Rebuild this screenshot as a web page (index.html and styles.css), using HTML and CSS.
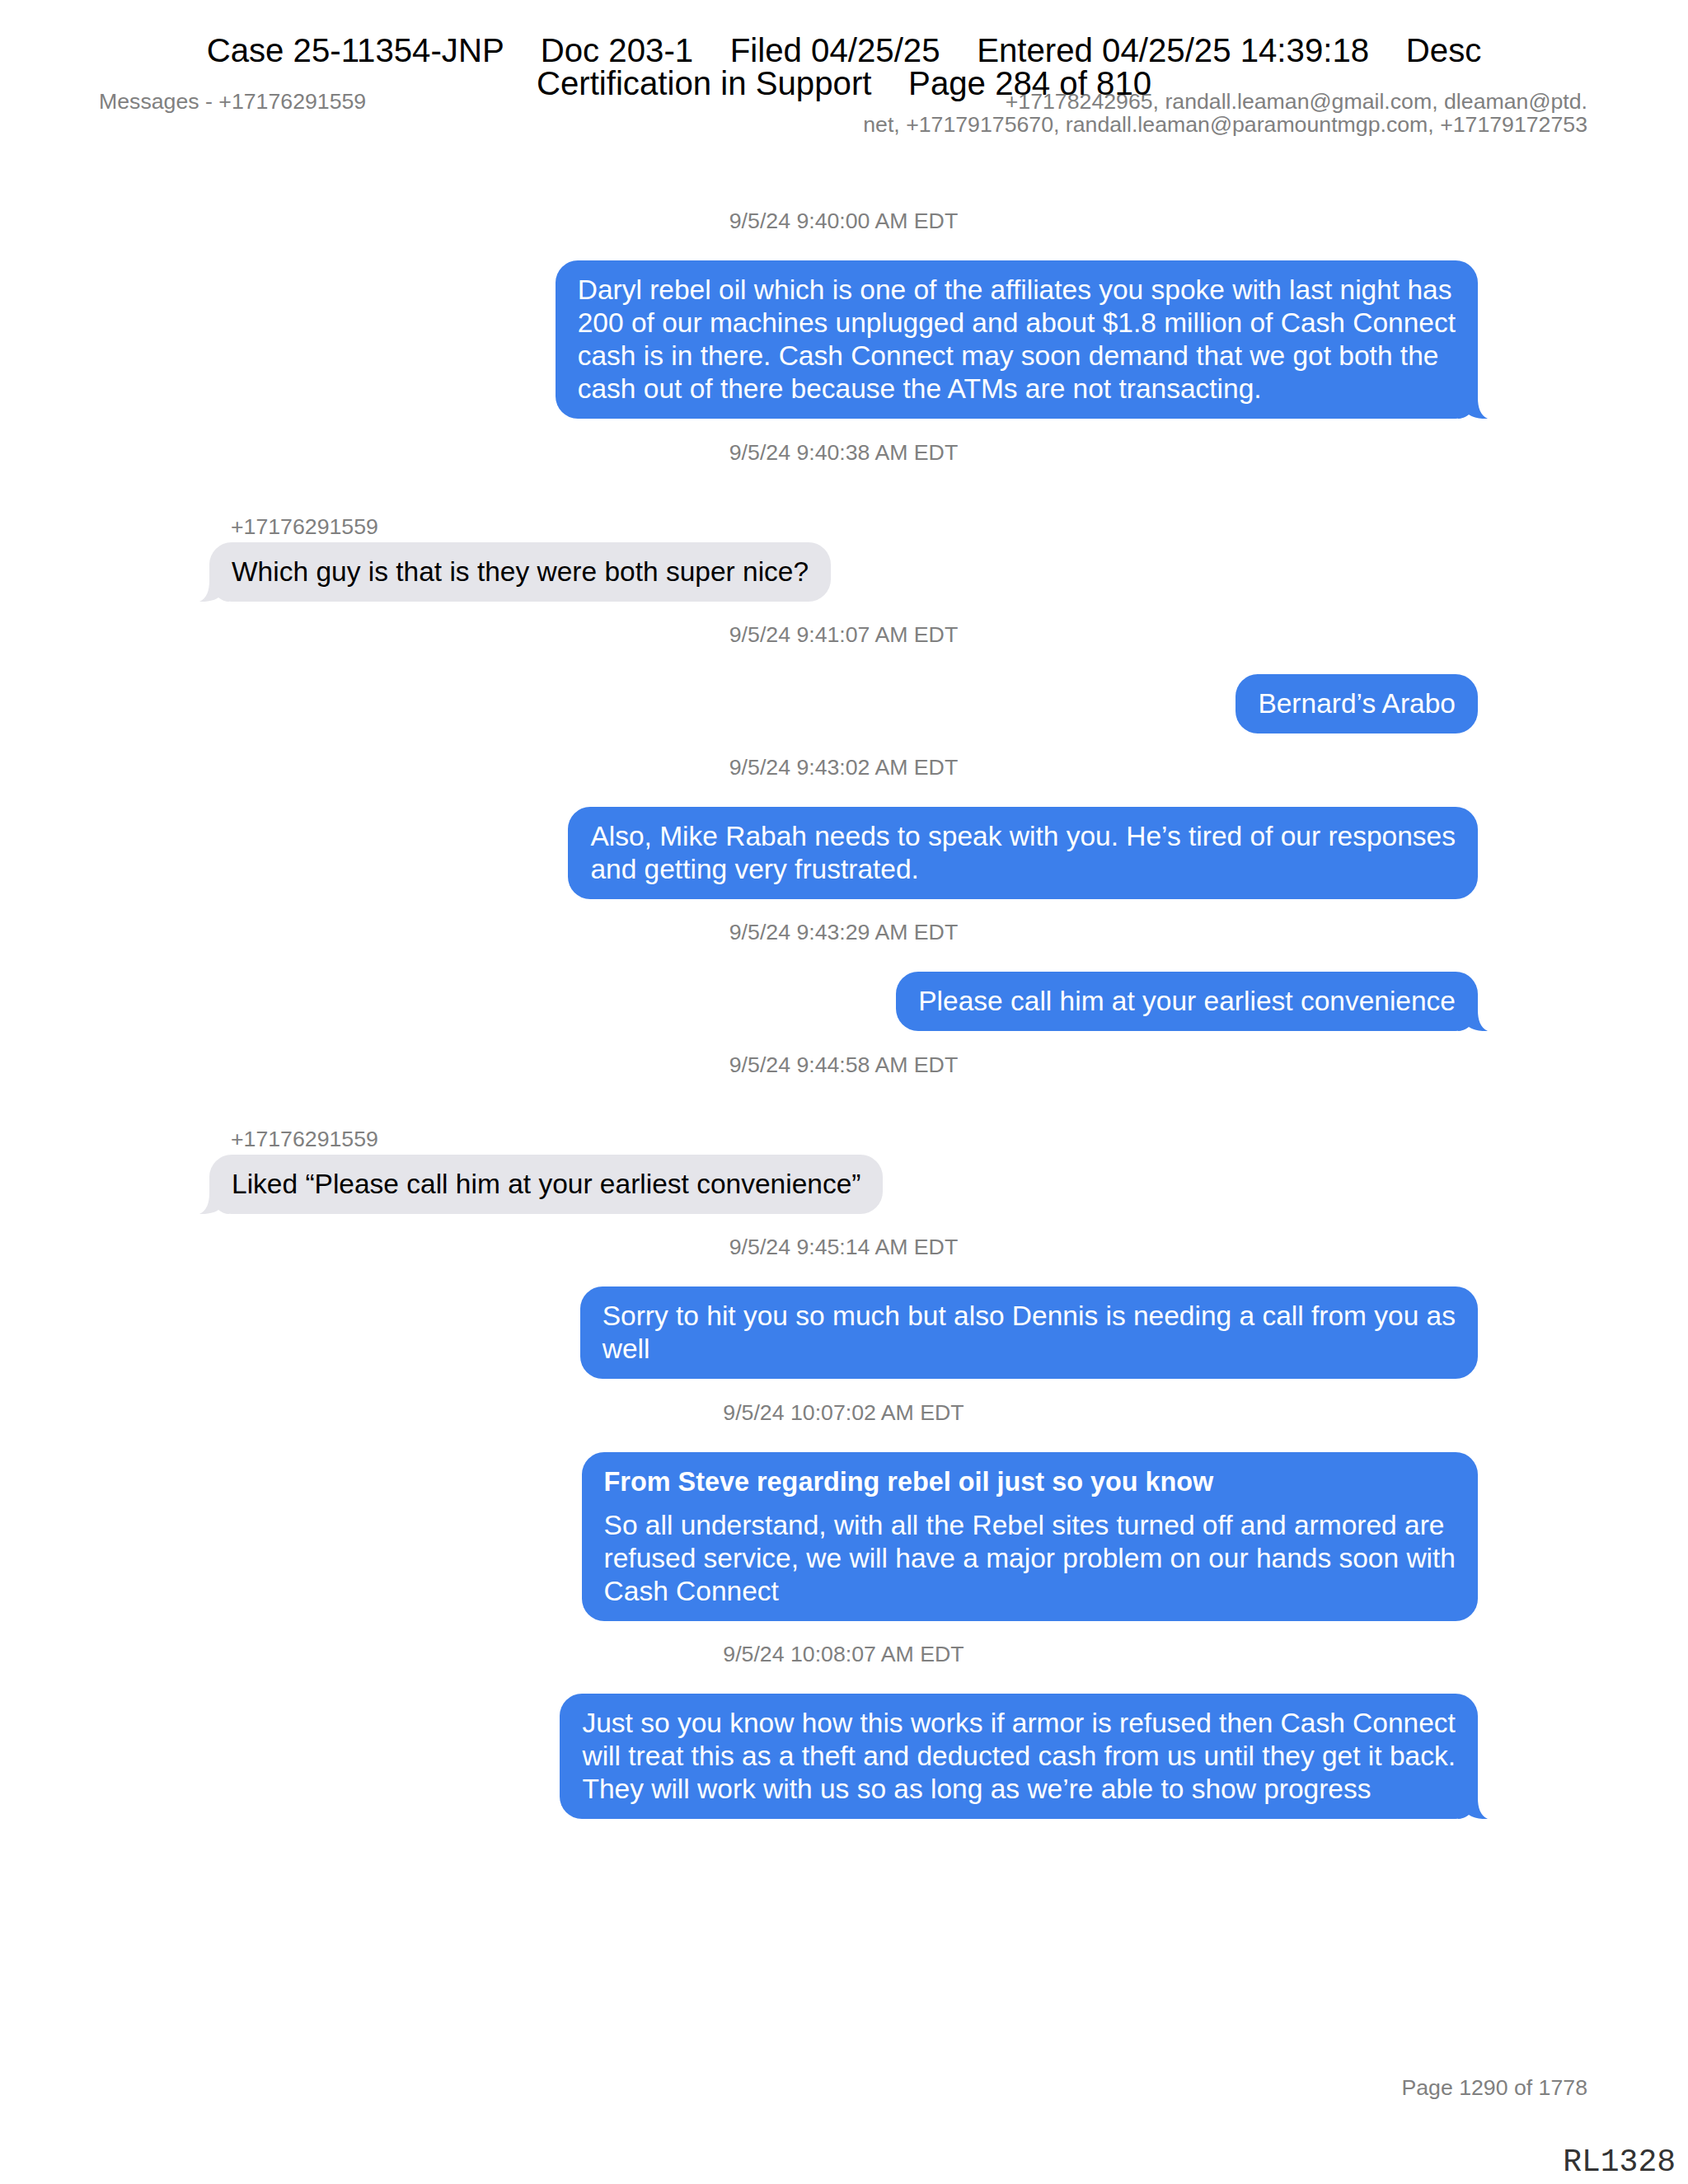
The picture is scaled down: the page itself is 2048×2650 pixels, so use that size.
FILE: index.html
```
<!DOCTYPE html>
<html lang="en">
<head>
<meta charset="utf-8">
<title>Messages - +17176291559</title>
<link rel="stylesheet" href="styles.css">
</head>
<body>
<div class="page">
  <div class="stamp">
    <div class="stamp-line">Case 25-11354-JNP    Doc 203-1    Filed 04/25/25    Entered 04/25/25 14:39:18    Desc</div>
    <div class="stamp-line">Certification in Support    Page 284 of 810</div>
  </div>

  <header class="meta">
    <div class="meta-left">Messages - +17176291559</div>
    <div class="meta-right">+17178242965, randall.leaman@gmail.com, dleaman@ptd.<br>net, +17179175670, randall.leaman@paramountmgp.com, +17179172753</div>
  </header>

  <main class="thread">
    <div class="ts first">9/5/24 9:40:00 AM EDT</div>
    <div class="bubble out">Daryl rebel oil which is one of the affiliates you spoke with last night has<br>200 of our machines unplugged and about $1.8 million of Cash Connect<br>cash is in there. Cash Connect may soon demand that we got both the<br>cash out of there because the ATMs are not transacting.<svg class="tail" viewBox="0 0 36 28" width="36" height="28"><path d="M0,0 H24 V3 C24,14 27,24 36,28 C30,28.5 19,27.5 13,23 C9,26 5,28 0,28 Z"/></svg></div>

    <div class="ts">9/5/24 9:40:38 AM EDT</div>
    <div class="sender">+17176291559</div>
    <div class="bubble in">Which guy is that is they were both super nice?<svg class="tail" viewBox="0 0 36 28" width="36" height="28"><path d="M0,0 H24 V3 C24,14 27,24 36,28 C30,28.5 19,27.5 13,23 C9,26 5,28 0,28 Z"/></svg></div>

    <div class="ts">9/5/24 9:41:07 AM EDT</div>
    <div class="bubble out">Bernard’s Arabo</div>

    <div class="ts">9/5/24 9:43:02 AM EDT</div>
    <div class="bubble out">Also, Mike Rabah needs to speak with you. He’s tired of our responses<br>and getting very frustrated.</div>

    <div class="ts">9/5/24 9:43:29 AM EDT</div>
    <div class="bubble out">Please call him at your earliest convenience<svg class="tail" viewBox="0 0 36 28" width="36" height="28"><path d="M0,0 H24 V3 C24,14 27,24 36,28 C30,28.5 19,27.5 13,23 C9,26 5,28 0,28 Z"/></svg></div>

    <div class="ts">9/5/24 9:44:58 AM EDT</div>
    <div class="sender">+17176291559</div>
    <div class="bubble in">Liked “Please call him at your earliest convenience”<svg class="tail" viewBox="0 0 36 28" width="36" height="28"><path d="M0,0 H24 V3 C24,14 27,24 36,28 C30,28.5 19,27.5 13,23 C9,26 5,28 0,28 Z"/></svg></div>

    <div class="ts">9/5/24 9:45:14 AM EDT</div>
    <div class="bubble out">Sorry to hit you so much but also Dennis is needing a call from you as<br>well</div>

    <div class="ts">9/5/24 10:07:02 AM EDT</div>
    <div class="bubble out"><div class="bubble-title">From Steve regarding rebel oil just so you know</div>So all understand, with all the Rebel sites turned off and armored are<br>refused service, we will have a major problem on our hands soon with<br>Cash Connect</div>

    <div class="ts">9/5/24 10:08:07 AM EDT</div>
    <div class="bubble out">Just so you know how this works if armor is refused then Cash Connect<br>will treat this as a theft and deducted cash from us until they get it back.<br>They will work with us so as long as we’re able to show progress<svg class="tail" viewBox="0 0 36 28" width="36" height="28"><path d="M0,0 H24 V3 C24,14 27,24 36,28 C30,28.5 19,27.5 13,23 C9,26 5,28 0,28 Z"/></svg></div>
  </main>

  <footer class="footer">
    <div class="page-num">Page 1290 of 1778</div>
    <div class="bates">RL1328</div>
  </footer>
</div>
</body>
</html>
```

FILE: styles.css
```
* {
  box-sizing: border-box;
}

html, body {
  margin: 0;
  padding: 0;
  background: #ffffff;
}

body {
  font-family: "Liberation Sans", Arial, Helvetica, sans-serif;
  color: #000;
}

.page {
  position: relative;
  width: 2048px;
  min-height: 2650px;
  display: flex;
  flex-direction: column;
}

/* court filing stamp overlaid on top of the page */
.stamp {
  position: absolute;
  top: 41.5px;
  left: 0;
  right: 0;
  text-align: center;
  font-size: 40.2px;
  line-height: 40px;
  color: #000;
  z-index: 2;
}

.stamp-line {
  white-space: pre;
}

.meta {
  display: flex;
  justify-content: space-between;
  align-items: flex-start;
  padding: 109px 122px 0 120px;
  font-size: 26.7px;
  line-height: 28px;
  color: #808080;
}

.meta-right {
  text-align: right;
}

.thread {
  display: flex;
  flex-direction: column;
  padding: 87px 255px 0 254px;
}

.ts {
  align-self: center;
  font-size: 26.7px;
  line-height: 32px;
  color: #808080;
  margin-top: 24.5px;
  margin-bottom: 32px;
}

.ts.first {
  margin-top: 0;
}

.sender {
  align-self: flex-start;
  font-size: 26.7px;
  line-height: 32px;
  color: #808080;
  padding-left: 26px;
  margin-top: 26px;
  margin-bottom: 3px;
}

.bubble {
  position: relative;
  font-size: 33.5px;
  line-height: 40px;
  padding: 16px 27px;
  border-radius: 27px;
  white-space: nowrap;
}

.bubble.out {
  align-self: flex-end;
  background: #3c7feb;
  color: #ffffff;
}

.bubble.in {
  align-self: flex-start;
  background: #e5e5ea;
  color: #000000;
}

.bubble-title {
  font-size: 32.4px;
  font-weight: bold;
  margin-bottom: 13px;
}

.tail {
  position: absolute;
  bottom: 0;
  width: 36px;
  height: 28px;
}

.bubble.out .tail {
  right: -12px;
  fill: #3c7feb;
}

.bubble.in .tail {
  left: -12px;
  fill: #e5e5ea;
  transform: scaleX(-1);
}

.footer {
  margin-top: auto;
  display: flex;
  flex-direction: column;
  align-items: flex-end;
  padding-bottom: 4px;
}

.page-num {
  font-size: 26.7px;
  line-height: 32px;
  color: #808080;
  padding-right: 122px;
  margin-bottom: 53px;
}

.bates {
  font-family: "Liberation Mono", "Courier New", monospace;
  font-size: 38px;
  line-height: 44px;
  color: #333;
  padding-right: 15px;
}
```
